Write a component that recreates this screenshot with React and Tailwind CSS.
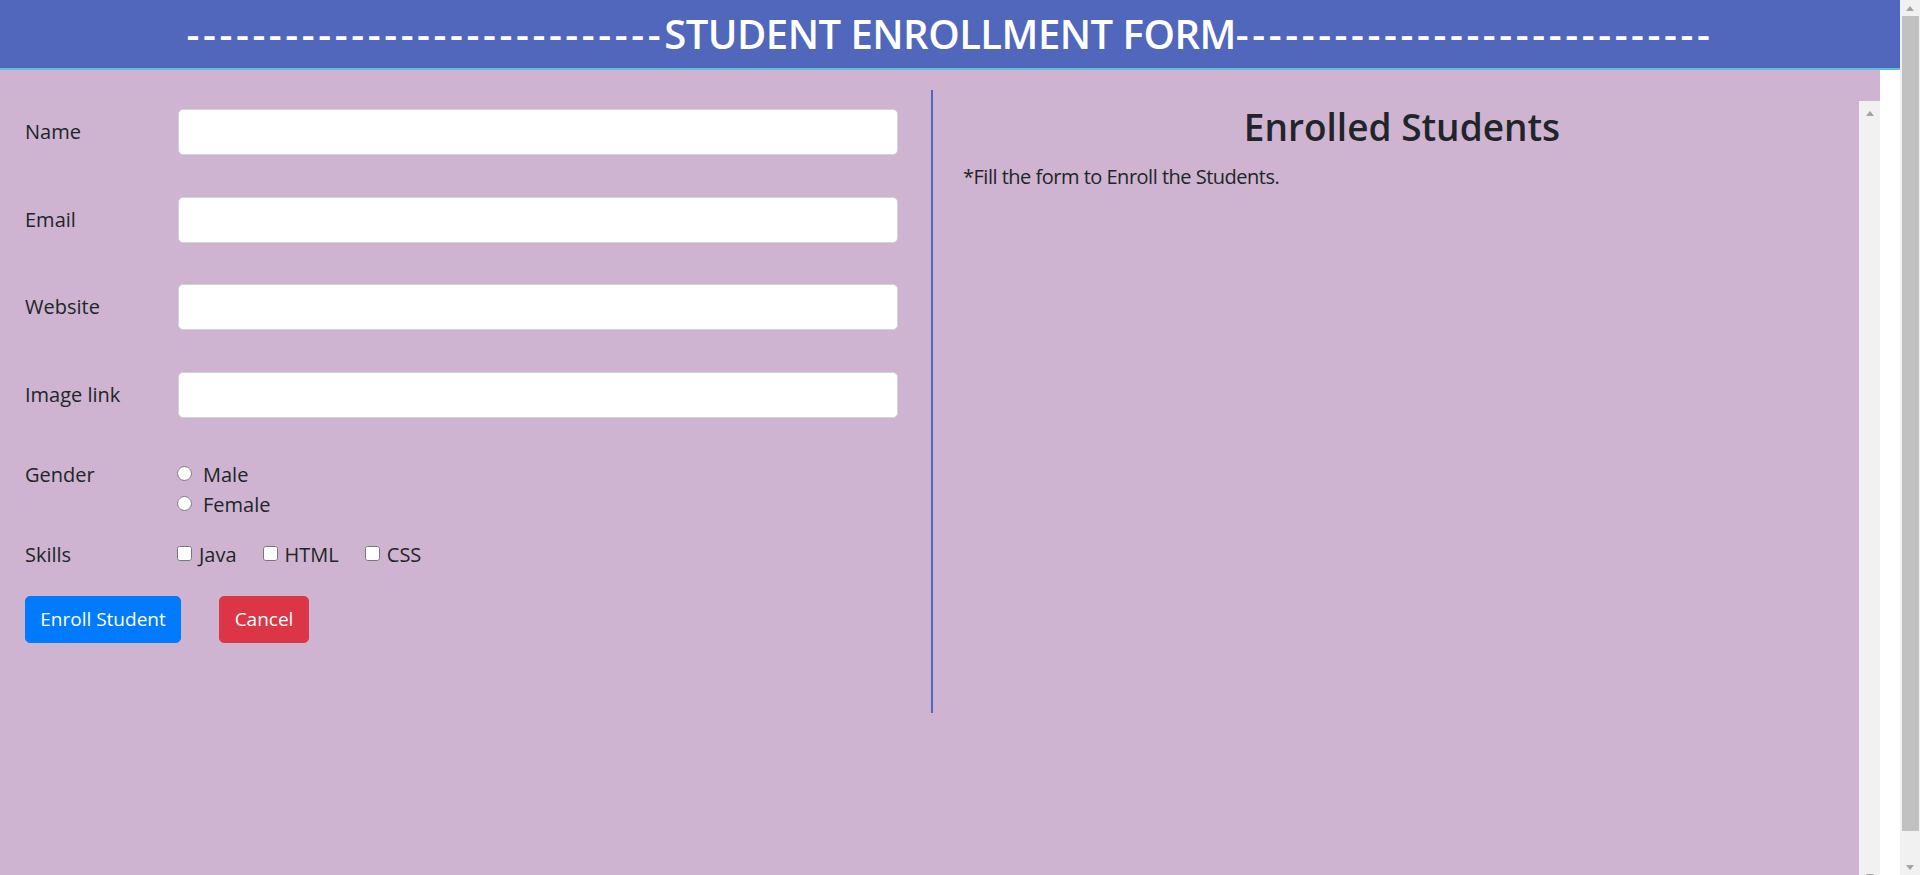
import React from "react";

const font = { fontFamily: '"Open Sans", "Noto Sans", Arial, sans-serif' };

function Arrow({ down }) {
  return (
    <svg width="8" height="5" viewBox="0 0 8 5" className="block">
      <polygon points={down ? "0,0 8,0 4,5" : "0,5 8,5 4,0"} fill="#a3a3a3" />
    </svg>
  );
}

function TextRow({ label }) {
  return (
    <div className="flex items-center mb-[41.5px]">
      <label className="w-[153px] shrink-0">{label}</label>
      <input
        type="text"
        className="w-[720px] h-[46px] bg-white border border-[#ced4da] rounded-[5px] px-3 outline-none"
      />
    </div>
  );
}

export default function App() {
  const dashes = "-----------------------------";
  return (
    <div className="flex h-[875px] w-[1920px] overflow-hidden text-[20px] text-[#212529]" style={font}>
      <div className="flex flex-col w-[1900px]">
        <header className="h-[70px] bg-[#5067bc] border-b-2 border-[#5bc0de] flex items-center justify-center">
          <h2 className="text-[40px] font-semibold text-white leading-[48px] tracking-[-0.5px] whitespace-nowrap">
            <span className="tracking-[3.6px]">{dashes}</span>
            STUDENT ENROLLMENT FORM
            <span className="tracking-[3.6px]">{dashes}</span>
          </h2>
        </header>

        <div className="flex flex-1 min-h-0">
          <div className="flex flex-1 bg-[#ceb4d0]">
            {/* form */}
            <form className="w-[931px] shrink-0 pl-[25px] pt-[39px]" onSubmit={e => e.preventDefault()}>
              <TextRow label="Name" />
              <TextRow label="Email" />
              <TextRow label="Website" />
              <TextRow label="Image link" />

              <div className="flex leading-[30px] pt-[1px]">
                <label className="w-[152px] shrink-0">Gender</label>
                <div className="flex flex-col">
                  <label className="flex items-center gap-[11px]">
                    <input type="radio" name="gender" className="w-[15px] h-[15px] m-0 -mt-[4px]" />
                    Male
                  </label>
                  <label className="flex items-center gap-[11px]">
                    <input type="radio" name="gender" className="w-[15px] h-[15px] m-0 -mt-[4px]" />
                    Female
                  </label>
                </div>
              </div>

              <div className="flex leading-[30px] mt-[20px]">
                <label className="w-[152px] shrink-0">Skills</label>
                <div className="flex items-center gap-[26px]">
                  <label className="flex items-center gap-[7px]">
                    <input type="checkbox" className="w-[15px] h-[15px] m-0 -mt-[4px]" />
                    Java
                  </label>
                  <label className="flex items-center gap-[7px]">
                    <input type="checkbox" className="w-[15px] h-[15px] m-0 -mt-[4px]" />
                    HTML
                  </label>
                  <label className="flex items-center gap-[7px]">
                    <input type="checkbox" className="w-[15px] h-[15px] m-0 -mt-[4px]" />
                    CSS
                  </label>
                </div>
              </div>

              <div className="flex gap-[38px] mt-[26px] text-[19px]">
                <button
                  type="submit"
                  className="w-[156px] h-[47px] rounded-[5px] bg-[#007bff] border border-[#007bff] text-white"
                >
                  Enroll Student
                </button>
                <button
                  type="button"
                  className="w-[90px] h-[47px] rounded-[5px] bg-[#dc3545] border border-[#dc3545] text-white"
                >
                  Cancel
                </button>
              </div>
            </form>

            {/* divider */}
            <div className="w-[2px] h-[623px] mt-[20px] bg-[#5067bc] shrink-0" />

            {/* enrolled list */}
            <div className="flex-1 pl-[30px] pr-[18px] pt-[33px]">
              <h2 className="text-[37px] font-semibold leading-[48px] text-center">Enrolled Students</h2>
              <p className="mt-[11px] leading-[30px] tracking-[-0.5px]">*Fill the form to Enroll the Students.</p>
            </div>

            {/* inner scrollbar */}
            <div className="w-[21px] mt-[31px] bg-[#f1f1f1] flex flex-col items-center justify-between pt-[10px] pb-[2px] mb-[-6px]">
              <Arrow />
              <Arrow down />
            </div>
          </div>
          <div className="w-[20px] bg-white" />
        </div>
      </div>

      {/* page scrollbar */}
      <div className="w-[20px] bg-[#f1f1f1] flex flex-col items-center">
        <div className="h-[16px] flex items-center">
          <Arrow />
        </div>
        <div className="w-[17px] h-[815px] bg-[#c1c1c1]" />
        <div className="flex-1" />
        <div className="h-[16px] flex items-center">
          <Arrow down />
        </div>
      </div>
    </div>
  );
}
